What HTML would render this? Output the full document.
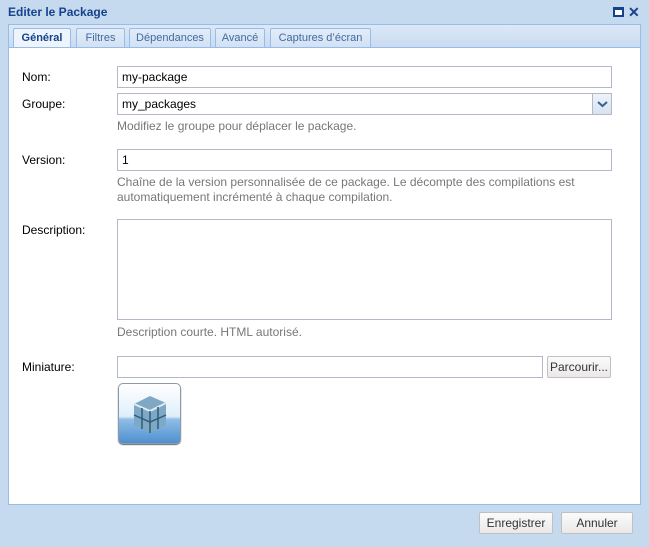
<!DOCTYPE html>
<html><head><meta charset="utf-8"><style>
*{box-sizing:border-box;margin:0;padding:0}
body{width:649px;height:547px;background:#c6daef;font-family:"Liberation Sans",sans-serif;font-size:12px;color:#000;position:relative;overflow:hidden}
.abs{position:absolute}
.title{left:8px;top:5px;font-weight:bold;color:#15428b;font-size:12px}
.tabbar{left:8px;top:24px;width:633px;height:24px;background:linear-gradient(#dbe8f7,#c9dbf0);border:1px solid #99bbe8;border-bottom:none}
.tab{position:absolute;top:3px;height:21px;border:1px solid #99bbe8;border-bottom:none;background:linear-gradient(#e2ecf8,#d0e0f3);color:#416aa3;text-align:center;line-height:19px;font-size:11px;border-radius:2px 2px 0 0;white-space:nowrap}
.tab.on{background:#eef4fb;color:#15428b;font-weight:bold;height:22px}
.panel{left:8px;top:47px;width:633px;height:458px;background:#fff;border:1px solid #99bbe8}
.lbl{left:22px;color:#000}
.inp{left:117px;width:495px;height:22px;border:1px solid #b5b8c8;background:#fff;padding:3px 4px;font-size:12px}
.hint{left:117px;color:#777;font-size:12px;line-height:15px}
.btn{height:22px;border:1px solid #c0c0c0;background:linear-gradient(#fbfbfb,#ece8e8);text-align:center;line-height:20px;color:#333;font-size:12px;border-radius:2px}
</style></head><body>
<div class="abs title">Editer le Package</div>
<div class="abs" style="left:613px;top:7px;width:11px;height:10px;border:2px solid #15428b;border-top-width:3px;background:#fff"></div>
<div class="abs" style="left:628px;top:4px;color:#15428b;font-size:14px;font-weight:bold">✕</div>
<div class="abs tabbar">
<div class="tab on" style="left:4px;width:58px">Général</div>
<div class="tab" style="left:67px;width:49px">Filtres</div>
<div class="tab" style="left:120px;width:82px">Dépendances</div>
<div class="tab" style="left:206px;width:50px">Avancé</div>
<div class="tab" style="left:261px;width:101px">Captures d’écran</div>
</div>
<div class="abs panel"></div>
<div class="abs lbl" style="top:70px">Nom:</div>
<div class="abs inp" style="top:66px">my-package</div>
<div class="abs lbl" style="top:97px">Groupe:</div>
<div class="abs inp" style="top:93px">my_packages</div>
<div class="abs" style="left:592px;top:94px;width:19px;height:20px;background:linear-gradient(#eef3fa,#d6e3f2);border-left:1px solid #b5b8c8"><svg width="19" height="20"><path d="M5 8l4.5 4 4.5-4" stroke="#3a5f93" stroke-width="2" fill="none"/></svg></div>
<div class="abs hint" style="top:119px">Modifiez le groupe pour déplacer le package.</div>
<div class="abs lbl" style="top:153px">Version:</div>
<div class="abs inp" style="top:149px">1</div>
<div class="abs hint" style="top:175px">Chaîne de la version personnalisée de ce package. Le décompte des compilations est<br>automatiquement incrémenté à chaque compilation.</div>
<div class="abs lbl" style="top:223px">Description:</div>
<div class="abs inp" style="top:219px;height:101px"></div>
<div class="abs hint" style="top:325px">Description courte. HTML autorisé.</div>
<div class="abs lbl" style="top:360px">Miniature:</div>
<div class="abs inp" style="top:356px;width:426px"></div>
<div class="abs btn" style="left:547px;top:356px;width:64px">Parcourir...</div>
<div class="abs" style="left:118px;top:383px;width:63px;height:61px;border:1px solid #8a9aa8;border-radius:5px;background:linear-gradient(#fff,#dfeefa 55%,#8fbde6 60%,#4f8fd0);box-shadow:0 1px 1px #666;overflow:hidden">
<svg width="61" height="59"><path d="M15 20l16-8 16 7v22l-16 8-16-8z" fill="#7fa8c4"/><path d="M15 20l16 7 16-8" stroke="#dce9f2" stroke-width="2" fill="none"/><path d="M31 27v22M23 24v21M39 23v22M15 31l16 7 16-7" stroke="#2f5c7e" stroke-width="1.5" fill="none"/></svg></div>
<div class="abs btn" style="left:479px;top:512px;width:74px">Enregistrer</div>
<div class="abs btn" style="left:561px;top:512px;width:72px">Annuler</div>
</body></html>
